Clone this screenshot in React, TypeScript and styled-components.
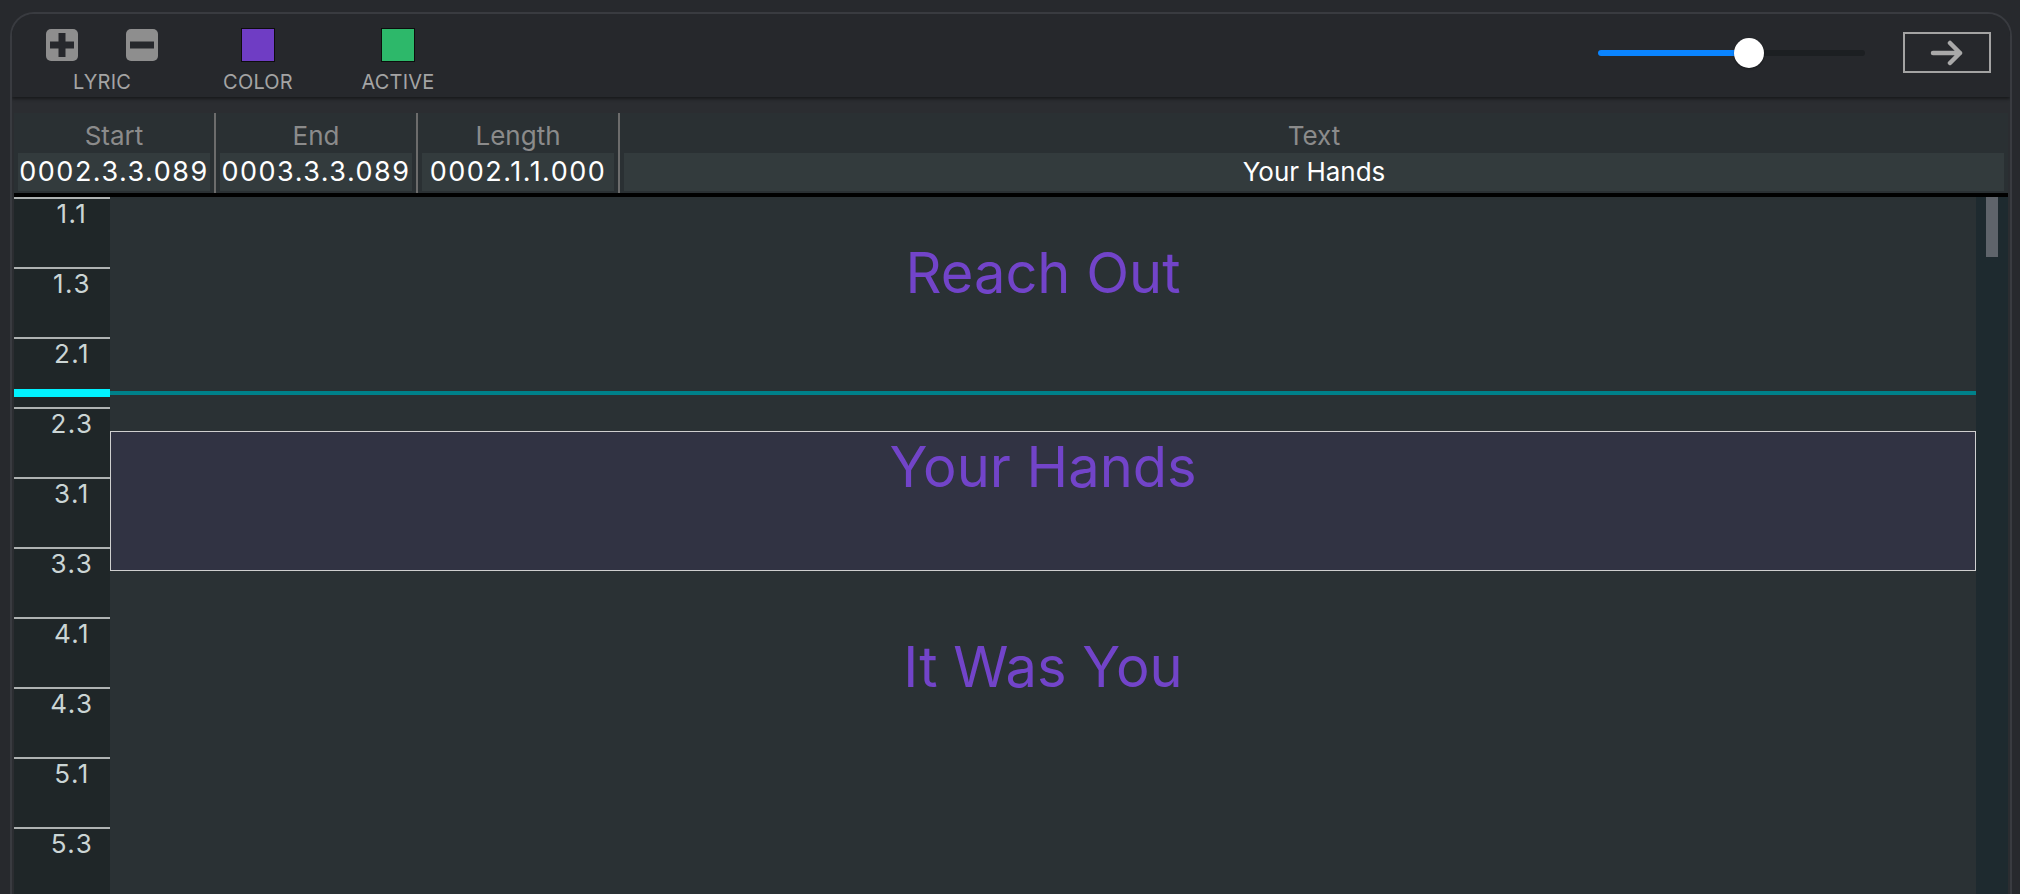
import React from "react";
import styled, { createGlobalStyle } from "styled-components";

const GlobalStyle = createGlobalStyle`
  html, body {
    margin: 0;
    padding: 0;
    background: #27292d;
    overflow: hidden;
  }
  body {
    font-family: Inter, "Noto Sans", sans-serif;
  }
`;

const ticks = ["1.1", "1.3", "2.1", "2.3", "3.1", "3.3", "4.1", "4.3", "5.1", "5.3"];

// canvas offsets in px, measured from the top of the timeline
const lyrics = [
  { text: "Reach Out", top: 40, height: 194, selected: false },
  { text: "Your Hands", top: 234, height: 140, selected: true },
  { text: "It Was You", top: 434, height: 140, selected: false },
];

const sliderValue = 0.566;
const playheadTop = 192;

const PlusIcon = () => (
  <svg width="32" height="32" viewBox="0 0 32 32">
    <rect width="32" height="32" rx="5" fill="#8e8e8e" />
    <rect x="4" y="12.5" width="24" height="7" fill="#26282c" />
    <rect x="12.5" y="4" width="7" height="24" fill="#26282c" />
  </svg>
);

const MinusIcon = () => (
  <svg width="32" height="32" viewBox="0 0 32 32">
    <rect width="32" height="32" rx="5" fill="#8e8e8e" />
    <rect x="4" y="12.5" width="24" height="7" fill="#26282c" />
  </svg>
);

const ArrowIcon = () => (
  <svg width="34" height="26" viewBox="0 0 34 26">
    <path
      d="M3 13 H30 M20 3 L30 13 L20 23"
      fill="none"
      stroke="#a9a9a9"
      strokeWidth="4.5"
      strokeLinecap="round"
      strokeLinejoin="round"
    />
  </svg>
);

const App = () => {
  return (
    <>
      <GlobalStyle />
      <Window>
        <Toolbar>
          <ToolGroup $shift={0}>
            <ToolRow>
              <IconButton>
                <PlusIcon />
              </IconButton>
              <IconButton>
                <MinusIcon />
              </IconButton>
            </ToolRow>
            <ToolLabel>LYRIC</ToolLabel>
          </ToolGroup>
          <ToolGroup $shift={44}>
            <ToolRow>
              <Swatch $color="#6f3dc4" />
            </ToolRow>
            <ToolLabel>COLOR</ToolLabel>
          </ToolGroup>
          <ToolGroup $shift={28}>
            <ToolRow>
              <Swatch $color="#2db86a" />
            </ToolRow>
            <ToolLabel>ACTIVE</ToolLabel>
          </ToolGroup>

          <RightTools>
            <Slider>
              <SliderTrack>
                <SliderFill style={{ width: `${sliderValue * 100}%` }} />
              </SliderTrack>
              <SliderThumb style={{ left: `${sliderValue * 100}%` }} />
            </Slider>
            <NextButton>
              <ArrowIcon />
            </NextButton>
          </RightTools>
        </Toolbar>

        <Body>
          <Header>
            <Column $divider>
              <ColLabel>Start</ColLabel>
              <ColValue $numeric>0002.3.3.089</ColValue>
            </Column>
            <Column $divider>
              <ColLabel>End</ColLabel>
              <ColValue $numeric>0003.3.3.089</ColValue>
            </Column>
            <Column $divider>
              <ColLabel>Length</ColLabel>
              <ColValue $numeric>0002.1.1.000</ColValue>
            </Column>
            <Column>
              <ColLabel>Text</ColLabel>
              <ColValue>Your Hands</ColValue>
            </Column>
          </Header>

          <Timeline>
            <Ruler>
              {ticks.map((t) => (
                <Tick key={t}>{t}</Tick>
              ))}
            </Ruler>
            <Canvas>
              {lyrics.map((l) => (
                <LyricBlock
                  key={l.text}
                  $selected={l.selected}
                  style={{ top: l.top, height: l.height }}
                >
                  <LyricText>{l.text}</LyricText>
                </LyricBlock>
              ))}
            </Canvas>
            <Scrollbar>
              <ScrollThumb />
            </Scrollbar>
            <Playhead style={{ top: playheadTop }}>
              <PlayheadMarker />
              <PlayheadLine />
            </Playhead>
          </Timeline>
        </Body>
      </Window>
    </>
  );
};

const Window = styled.div`
  margin: 12px 0 0 10px;
  width: 2002px;
  height: 900px;
  box-sizing: border-box;
  border: 2px solid #393b40;
  border-bottom: none;
  border-radius: 24px 24px 0 0;
  background: #2b2d31;
  overflow: hidden;
`;

const Toolbar = styled.div`
  height: 83px;
  box-sizing: border-box;
  display: flex;
  align-items: flex-start;
  padding: 14px 19px 0 34px;
  background: #26282c;
  box-shadow: 0 2px 3px rgba(0, 0, 0, 0.45);
  position: relative;
  z-index: 1;
`;

const ToolGroup = styled.div<{ $shift: number }>`
  width: 112px;
  margin-left: ${(p) => p.$shift}px;
  display: flex;
  flex-direction: column;
  align-items: center;
`;

const ToolRow = styled.div`
  height: 34px;
  display: flex;
  align-items: center;
  gap: 48px;
`;

const IconButton = styled.button`
  width: 32px;
  height: 32px;
  padding: 0;
  border: none;
  background: none;
  cursor: pointer;
  display: block;
  svg {
    display: block;
  }
`;

const Swatch = styled.div<{ $color: string }>`
  width: 34px;
  height: 34px;
  box-sizing: border-box;
  border: 1.5px solid #0d0d0d;
  background: ${(p) => p.$color};
`;

const ToolLabel = styled.div`
  margin-top: 8px;
  font-size: 20px;
  line-height: 24px;
  color: #a4a4a4;
  letter-spacing: 0.2px;
`;

const RightTools = styled.div`
  margin-left: auto;
  margin-top: 4px;
  height: 41px;
  display: flex;
  align-items: center;
  gap: 38px;
`;

const Slider = styled.div`
  width: 267px;
  height: 30px;
  position: relative;
  display: flex;
  align-items: center;
`;

const SliderTrack = styled.div`
  width: 100%;
  height: 6px;
  border-radius: 3px;
  background: #1c1f22;
  overflow: hidden;
`;

const SliderFill = styled.div`
  height: 100%;
  background: #0a84ff;
`;

const SliderThumb = styled.div`
  position: absolute;
  top: 0;
  width: 30px;
  height: 30px;
  margin-left: -15px;
  border-radius: 50%;
  background: #ffffff;
  box-shadow: 0 1px 2px rgba(0, 0, 0, 0.4);
`;

const NextButton = styled.button`
  width: 88px;
  height: 41px;
  box-sizing: border-box;
  border: 2px solid #a3a3a3;
  background: transparent;
  display: flex;
  align-items: center;
  justify-content: center;
  padding: 0;
  cursor: pointer;
`;

const Body = styled.div`
  padding: 16px 2px 0;
`;

const Header = styled.div`
  display: grid;
  grid-template-columns: 202px 202px 202px 1fr;
  background: #2a3033;
  border-bottom: 4px solid #000;
`;

const Column = styled.div<{ $divider?: boolean }>`
  display: flex;
  flex-direction: column;
  padding-bottom: 2px;
  border-right: ${(p) => (p.$divider ? "2px solid #6c6c6c" : "none")};
`;

const ColLabel = styled.div`
  height: 40px;
  box-sizing: border-box;
  padding-top: 7px;
  line-height: 32px;
  text-align: center;
  font-size: 26px;
  color: #8b8b8b;
`;

const ColValue = styled.div<{ $numeric?: boolean }>`
  margin: 0 4px;
  height: 38px;
  line-height: 38px;
  background: #333b3d;
  text-align: center;
  font-size: ${(p) => (p.$numeric ? "27px" : "26px")};
  letter-spacing: ${(p) => (p.$numeric ? "1.5px" : "0")};
  color: #ffffff;
  white-space: nowrap;
`;

const Timeline = styled.div`
  position: relative;
  display: grid;
  grid-template-columns: 96px 1fr 32px;
  height: 697px;
`;

const Ruler = styled.div`
  background: #1f2628;
  display: flex;
  flex-direction: column;
  overflow: hidden;
`;

const Tick = styled.div`
  height: 70px;
  flex-shrink: 0;
  box-sizing: border-box;
  border-top: 2px solid #aeb2b2;
  padding-left: 20px;
  font-size: 26px;
  line-height: 30px;
  letter-spacing: 1.5px;
  text-align: center;
  color: #cbd5d5;
`;

const Canvas = styled.div`
  position: relative;
  background: #2a3134;
  overflow: hidden;
`;

const LyricBlock = styled.div<{ $selected: boolean }>`
  position: absolute;
  left: 0;
  right: 0;
  box-sizing: border-box;
  background: ${(p) => (p.$selected ? "#313343" : "transparent")};
  border: 1px solid ${(p) => (p.$selected ? "#cfcfcf" : "transparent")};
`;

const LyricText = styled.div`
  margin-top: -1px;
  font-size: 56px;
  line-height: 73px;
  text-align: center;
  color: #7244c9;
`;

const Scrollbar = styled.div`
  background: #1e2a2f;
  padding-left: 10px;
`;

const ScrollThumb = styled.div`
  width: 12px;
  height: 60px;
  background: #5f646b;
`;

const Playhead = styled.div`
  position: absolute;
  left: 0;
  right: 32px;
  height: 8px;
  display: flex;
  align-items: center;
`;

const PlayheadMarker = styled.div`
  width: 96px;
  height: 8px;
  background: #00f2ff;
`;

const PlayheadLine = styled.div`
  flex: 1;
  height: 4px;
  background: #00818a;
`;

export default App;
